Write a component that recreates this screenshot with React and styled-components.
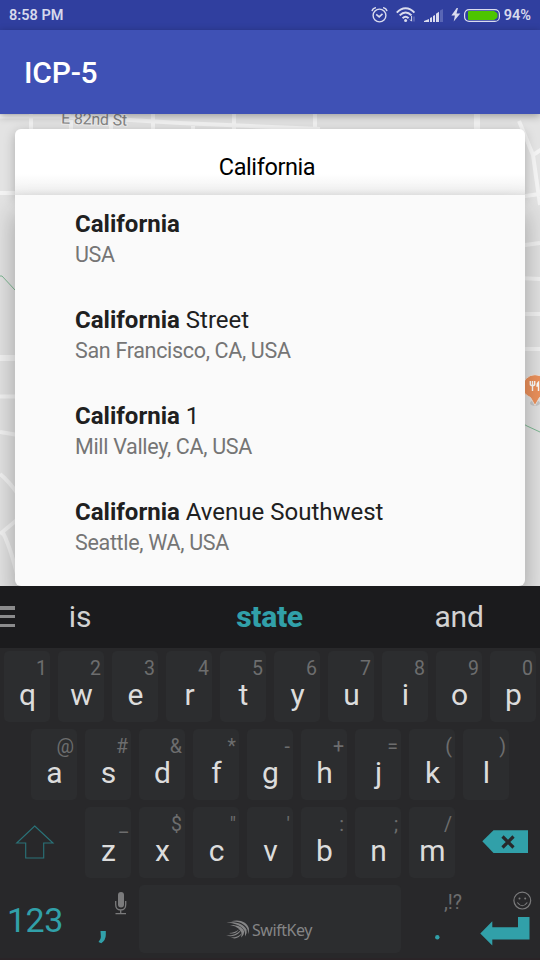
import React from "react";
import styled, { createGlobalStyle } from "styled-components";

const accent = "#31a0a9";

const GlobalStyle = createGlobalStyle`
  * { box-sizing: border-box; }
  body { margin: 0; font-family: Roboto, "Liberation Sans", sans-serif; }
  svg { display: block; flex: none; }
`;

const Screen = styled.div`
  display: flex;
  flex-direction: column;
  width: 540px;
  height: 960px;
  overflow: hidden;
  background: #29292b;
`;

const StatusBar = styled.header`
  display: flex;
  align-items: center;
  height: 30px;
  flex: none;
  padding: 0 9px;
  background: #303f9f;
  color: #d6d9ec;
  font-size: 14.5px;
  font-weight: 600;
  line-height: 31px;
`;

const StatusIcons = styled.div`
  display: flex;
  align-items: center;
  height: 30px;
  margin-left: auto;
`;

const Spacer = styled.span`
  width: ${(p) => p.$w}px;
`;

const AppBar = styled.div`
  position: relative;
  z-index: 1;
  height: 84px;
  flex: none;
  padding-left: 24px;
  background: #3f51b5;
  color: #fff;
  font-size: 30px;
  font-weight: 500;
  letter-spacing: -0.2px;
  line-height: 85px;
  box-shadow: 0 2px 8px rgba(0, 0, 0, 0.32);
`;

const MapArea = styled.main`
  position: relative;
  height: 472px;
  flex: none;
  padding: 15px 15px 0;
  overflow: hidden;
`;

const MapCanvas = styled.svg`
  position: absolute;
  inset: 0;
`;

const SearchCard = styled.div`
  position: relative;
  height: 70px;
  border-radius: 6px;
  background: linear-gradient(#fff 45px, #f3f3f3 60px, #e6e6e6 66px);
  color: #000;
  font-size: 23.5px;
  letter-spacing: -0.4px;
  line-height: 76px;
  text-align: center;
  padding-right: 6px;
  box-shadow: 0 3px 12px rgba(0, 0, 0, 0.25);
`;

const ResultList = styled.ul`
  position: relative;
  height: 391px;
  margin: -4px 0 0;
  padding: 0 0 0 60px;
  list-style: none;
  border-radius: 0 0 6px 6px;
  background: #fafafa;
  box-shadow: 0 16px 26px rgba(0, 0, 0, 0.3);
`;

const Result = styled.li`
  height: 96px;
  padding-top: 13px;
`;

const Place = styled.div`
  color: #202020;
  font-size: 24px;
  line-height: 32px;
`;

const Region = styled.div`
  color: #757575;
  font-size: 21.5px;
  letter-spacing: -0.32px;
  line-height: 29px;
`;

const Keyboard = styled.section`
  flex: none;
  height: 374px;
  background: #28282a;
  border-bottom: 2px solid #2a2427;
`;

const Suggestions = styled.div`
  display: grid;
  grid-template-columns: 15px 130px 249px 130px;
  align-items: center;
  height: 62px;
  background: #1b1b1d;
`;

const Suggestion = styled.span`
  text-align: center;
  color: ${(p) => (p.$main ? accent : "#d2d2d2")};
  font-size: 30px;
  font-weight: ${(p) => (p.$main ? 800 : 400)};
  letter-spacing: ${(p) => (p.$main ? -0.3 : -0.2)}px;
  line-height: 62px;
`;

const KeyRow = styled.div`
  display: flex;
  height: 78px;
  padding-left: ${(p) => p.$indent || 0}px;
`;

const Key = styled.div`
  position: relative;
  width: 46px;
  height: 71px;
  flex: none;
  margin: 3px 4px 0;
  border-radius: 5px;
  background: #2c2d2f;
  color: #dcdcdc;
  font-size: 30px;
  line-height: 88px;
  text-align: center;
  padding-left: 1px;
`;

const Hint = styled.span`
  position: absolute;
  top: ${(p) => p.$top ?? 5}px;
  right: ${(p) => p.$right ?? 3}px;
  color: #6d6d6e;
  font-size: 19.5px;
  font-weight: 400;
  line-height: 26px;
`;

const ControlKey = styled.div`
  position: relative;
  width: ${(p) => p.$w}px;
  height: 78px;
  flex: none;
  color: ${accent};
`;

const ModeLabel = styled.div`
  padding-left: 7px;
  font-size: 34px;
  line-height: 77px;
  letter-spacing: -0.5px;
`;

const SpaceBar = styled.div`
  display: flex;
  justify-content: center;
  align-items: center;
  gap: 2px;
  width: 262px;
  height: 68px;
  margin: 3px 4px 0;
  padding: 21px 2px 0 0;
  border-radius: 5px;
  background: #2c2d2f;
  color: #858586;
  font: 400 16px "Noto Sans", sans-serif;
  letter-spacing: -0.45px;
`;

const rows = [
  { indent: 0, keys: "qwertyuiop", hints: "1234567890" },
  { indent: 27, keys: "asdfghjkl", hints: "@#&*-+=()" },
];
const bottomKeys = { keys: "zxcvbnm", hints: "_$\"':;/" };

const results = [
  ["", "USA"],
  [" Street", "San Francisco, CA, USA"],
  [" 1", "Mill Valley, CA, USA"],
  [" Avenue Southwest", "Seattle, WA, USA"],
];

function Keys({ keys, hints }) {
  return [...keys].map((k, i) => (
    <Key key={k}>
      {k}
      <Hint>{hints[i]}</Hint>
    </Key>
  ));
}

function AlarmIcon() {
  return (
    <svg width="18" height="18" viewBox="0 0 18 18" fill="none" stroke="#dadcee" strokeWidth="1.4">
      <circle cx="8.5" cy="9.5" r="6.4" />
      <path d="M1 5.2C1.4 3.2 3 1.8 5 1.6M12 1.6c2 .2 3.6 1.6 4 3.6" />
      <path d="M5.2 8.3l3 2.6 3.3-3" strokeWidth="1.6" />
    </svg>
  );
}

function WifiIcon() {
  return (
    <svg width="20" height="16" viewBox="0 0 20 16" fill="none" stroke="#dadcee" strokeWidth="2">
      <path d="M.8 5.6C6-.2 13.2-.2 18.4 5.6" />
      <path d="M3.7 8.4c3.8-3.9 8-3.9 11.8 0" />
      <path d="M6.6 11.2c2-2 4-2 6 0" />
      <circle cx="9.6" cy="13.4" r="1.5" fill="#dadcee" stroke="none" />
      <path d="M15.6 9v5M14 12.5l1.6 1.8" strokeWidth="1" />
      <path d="M18 14.5v-5" stroke="#7882c2" strokeWidth="1" />
    </svg>
  );
}

function SignalIcon() {
  return (
    <svg width="19" height="13" viewBox="0 0 19 13">
      <path d="M0 13v-1l5-2v3zM6 9l2-1v5H6zM9 7l2-1v7H9zM12 4.800l3-2v10.200h-3z" fill="#dadcee" />
      <path d="M16 1.400L19 0v13h-3z" fill="#5966b5" />
    </svg>
  );
}

function BoltIcon() {
  return (
    <svg width="10" height="14" viewBox="0 0 10 14" fill="#dadcee">
      <path d="M5.700 0L.4 7.600h3.500L2.700 13.600 9.300 5.500H5.500L7 0z" />
    </svg>
  );
}

function BatteryIcon() {
  return (
    <svg width="36" height="13" viewBox="0 0 36 13">
      <rect x=".6" y=".6" width="34.800" height="11.800" rx="4.500" fill="none" stroke="#dadcee" strokeWidth="1.200" />
      <path d="M4.500 2.500h25.500l3 2v4l-3 2H4.500z" fill="#4dc500" stroke="#4dc500" strokeLinejoin="round" />
    </svg>
  );
}

function StreetMap() {
  return (
    <MapCanvas width="540" height="472" viewBox="0 114 540 472">
      <rect y="114" width="540" height="472" fill="#e3e3e3" />
      <g fill="none" stroke="#f3f3f3" strokeWidth="4">
        <path d="M0 116.500H60L130 120 180 123 320 129" />
        <path d="M31 114v15M71 120v9M111 120v9M153 114v15M193 126v3M234 114v15M315 114v15" />
        <path d="M477 114v15" strokeWidth="6" />
        <path d="M0 193h30M0 396.500h30M0 432l30 5M0 474q9 7 20 23M0 534l24-20M2 531q7 12 15 43" />
        <path d="M0 358h30" strokeWidth="6" />
        <path d="M519 121l14 34 7 50M533 155l9-6M518 197l22-3M518 246l22-3M518 278l22 1M518 314h22M518 349h22" />
      </g>
      <path d="M0 276h2l13 14 10 9M515 419l12 7 13 6" fill="none" stroke="#7fb994" />
      <text x="61" y="123.500" fontSize="16" letterSpacing="-.2" fill="#858585" stroke="#f1f1f1" strokeWidth="2" paintOrder="stroke" transform="rotate(2 61 123)">
        E 82nd St
      </text>
      <ellipse cx="535" cy="403" rx="5" ry="3" fill="#000" opacity=".12" />
      <path d="M535 405.500l-4.500-8c-5-2.500-8-5.500-8-10.300a12.500 12.500 0 0 1 25 0c0 4.800-3 7.800-8 10.300z" fill="#ef935d" stroke="#f1e6df" strokeWidth="1" />
      <path d="M530.300 381v3.200q0 1.300 2.200 1.300t2.200-1.300V381M532.500 381v10M538.500 391V382q-1.500 1-1.500 4h1.500" fill="none" stroke="#fff" strokeWidth="1.400" />
    </MapCanvas>
  );
}

const KeyArt = styled.svg`
  position: absolute;
  left: 0;
  top: 0;
`;

function Shift() {
  return (
    <KeyArt width="81" height="78" viewBox="0 804 81 78">
      <path d="M34.700 826L53 843H43.700v15H25.700V843H16.700z" fill="none" stroke="#2a7379" strokeWidth="1.100" />
    </KeyArt>
  );
}

function Backspace() {
  return (
    <KeyArt width="81" height="78" viewBox="459 804 81 78">
      <path d="M482.300 841.300L493.500 830.300H528V853H493.500z" fill={accent} />
      <path d="M502.500 836.500l11 11M513.500 836.500l-11 11" stroke="#28282a" strokeWidth="3.200" />
    </KeyArt>
  );
}

function Mic() {
  return (
    <KeyArt width="54" height="78" viewBox="81 882 54 78">
      <rect x="118" y="892" width="6" height="15.500" rx="3" fill="#7b7b7c" />
      <path d="M115.700 901v3.500q0 5.500 5 5.500t5-5.500V901M120.700 910v4M115.500 913.700h10.500" fill="none" stroke="#7b7b7c" strokeWidth="1.300" />
      <path d="M100.500 931h5.300v4q0 5-4.500 8.300l-2.800-1.400q2.400-2.400 2.400-4.900z" fill={accent} />
    </KeyArt>
  );
}

function Enter() {
  return (
    <KeyArt width="81" height="78" viewBox="459 882 81 78">
      <path d="M480.300 933.500L492.300 921.300V927.300H518V917H529.500V939.600H492.300V945.600z" fill={accent} />
      <g fill="none" stroke="#7b7b7c" strokeWidth="1.200">
        <circle cx="522.300" cy="900.600" r="8.400" />
        <path d="M517.300 902.500q5 6.500 10 0" />
      </g>
      <circle cx="519.500" cy="898.500" r="1" fill="#7b7b7c" />
      <circle cx="525.200" cy="898.500" r="1" fill="#7b7b7c" />
    </KeyArt>
  );
}

function SwiftLogo() {
  return (
    <svg width="24" height="19" viewBox="0 0 24 19" fill="#858586">
      <path d="M5 1.300C14-1 20.500 2 22.800 8q.6 3-.8 6.500.4-3-.6-5.500C18.500 3.500 13 1.500 5 1.300z" />
      <path d="M.3 2.500C10 1.300 17 3.500 20.500 9.500q1 3.500-1.500 7 .5-3.500-.7-6C14.500 5 9 3.300.3 2.500z" />
      <path d="M4 5c7-.3 12 1.700 14 6q.5 3.500-3 6.500 1-3 .3-5.300C13 8 9.500 6 4 5z" />
      <path d="M0 15.500c6 .3 10.500-1.200 15-5.500-2.500 5.300-8.500 7.500-15 5.500z" />
      <path d="M4.500 17.600c5 .2 8-1.200 11.300-4.300-2.300 4.700-6.300 6.200-11.300 4.300zM3 13c4-.3 7-1.200 10-3.800-2 3.600-5.500 5.300-10 3.800z" />
    </svg>
  );
}

export default function App() {
  return (
    <Screen>
      <GlobalStyle />
      <StatusBar>
        <span>8:58 PM</span>
        <StatusIcons>
          <AlarmIcon />
          <Spacer $w={7} />
          <WifiIcon />
          <Spacer $w={8} />
          <SignalIcon />
          <Spacer $w={8} />
          <BoltIcon />
          <Spacer $w={3} />
          <BatteryIcon />
          <Spacer $w={4} />
          <span>94%</span>
        </StatusIcons>
      </StatusBar>
      <AppBar>ICP-5</AppBar>
      <MapArea>
        <StreetMap />
        <SearchCard>California</SearchCard>
        <ResultList>
          {results.map(([rest, region]) => (
            <Result key={region}>
              <Place>
                <b>California</b>
                {rest}
              </Place>
              <Region>{region}</Region>
            </Result>
          ))}
        </ResultList>
      </MapArea>
      <Keyboard>
        <Suggestions>
          <svg width="15" height="22" viewBox="0 0 15 22" fill="#8b8b8c">
            <path d="M0 0h15v4H0zM0 9h15v3H0zM0 18h15v3H0z" />
          </svg>
          <Suggestion>is</Suggestion>
          <Suggestion $main>state</Suggestion>
          <Suggestion>and</Suggestion>
        </Suggestions>
        {rows.map((r) => (
          <KeyRow key={r.keys} $indent={r.indent}>
            <Keys keys={r.keys} hints={r.hints} />
          </KeyRow>
        ))}
        <KeyRow>
          <ControlKey $w={81}>
            <Shift />
          </ControlKey>
          <Keys {...bottomKeys} />
          <ControlKey $w={81}>
            <Backspace />
          </ControlKey>
        </KeyRow>
        <KeyRow>
          <ControlKey $w={81}>
            <ModeLabel>123</ModeLabel>
          </ControlKey>
          <ControlKey $w={54}>
            <Mic />
          </ControlKey>
          <SpaceBar>
            <SwiftLogo />
            SwiftKey
          </SpaceBar>
          <ControlKey $w={54}>
            <KeyArt width="54" height="78" viewBox="405 882 54 78">
              <circle cx="437.300" cy="937.300" r="2.200" fill={accent} />
            </KeyArt>
            <Hint $right={-3} $top={8}>,!?</Hint>
          </ControlKey>
          <ControlKey $w={81}>
            <Enter />
          </ControlKey>
        </KeyRow>
      </Keyboard>
    </Screen>
  );
}
